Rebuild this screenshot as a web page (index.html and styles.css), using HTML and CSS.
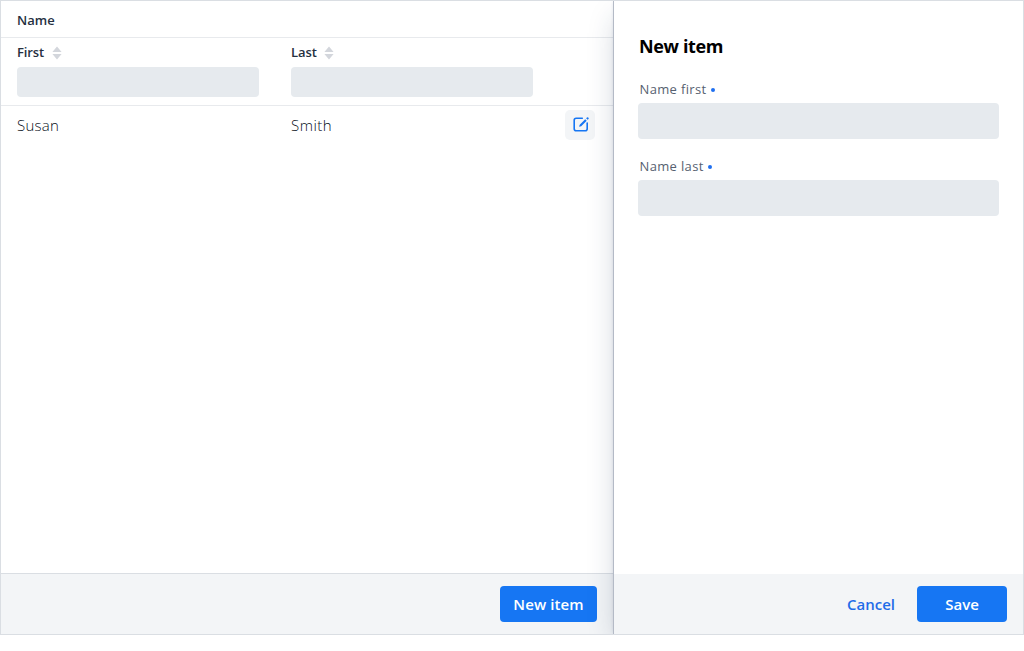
FILE: index.html
```html
<!DOCTYPE html>
<html lang="en">
<head>
<meta charset="utf-8">
<title>New item</title>
<link rel="stylesheet" href="styles.css">
</head>
<body>
<div class="crud">
  <main class="list">
    <div class="grid">
      <div class="group-row"><span class="head name">Name</span></div>
      <div class="row filter-row">
        <div class="cell">
          <div class="sorter"><span class="head first">First</span><svg class="sort" viewBox="0 0 10 14"><path d="M5 0.5 9.6 6H.4zM.4 8h9.2L5 13.5z"/></svg></div>
          <input class="filter" type="text" aria-label="First">
        </div>
        <div class="cell">
          <div class="sorter"><span class="head last">Last</span><svg class="sort" viewBox="0 0 10 14"><path d="M5 0.5 9.6 6H.4zM.4 8h9.2L5 13.5z"/></svg></div>
          <input class="filter" type="text" aria-label="Last">
        </div>
      </div>
      <div class="row data-row">
        <div class="cell"><span class="value susan">Susan</span></div>
        <div class="cell"><span class="value smith">Smith</span></div>
        <button class="edit" aria-label="Edit"><svg viewBox="0 0 16 16"><path class="frame" d="M9.3 2.2H3.2Q1.2 2.2 1.2 4.2v8.6Q1.2 14.8 3.2 14.8h9q2 0 2-2V7"/><path class="pencil" d="m6.1 10.8.6-2.1 5.5-5.5 1.5 1.5-5.5 5.5zM13.1 2.3l.9-.9q.6-.5 1.1 0l.4.4q.5.5 0 1.1l-.9.9z"/></svg></button>
      </div>
    </div>
    <footer class="toolbar list-toolbar"><button class="btn primary new"><span>New item</span></button></footer>
  </main>
  <aside class="editor">
    <form class="form">
      <h3 class="title"><span>New item</span></h3>
      <div class="field"><label for="f"><span class="name-first">Name first</span><i class="dot"></i></label><input id="f" type="text"></div>
      <div class="field"><label for="l"><span class="name-last">Name last</span><i class="dot"></i></label><input id="l" type="text"></div>
    </form>
    <footer class="toolbar"><button class="btn cancel"><span>Cancel</span></button><button class="btn primary save"><span>Save</span></button></footer>
  </aside>
</div>
</body>
</html>
```
FILE: styles.css
```css
* { box-sizing: border-box; }
body { margin: 0; background: #fff; font-family: "Open Sans", "Noto Sans", sans-serif; color: #25303f; }
button, input { font: inherit; border: 0; margin: 0; padding: 0; }
span { white-space: nowrap; }
.crud { display: flex; width: 1024px; height: 635px; border: 1px solid #dadee3; overflow: hidden; }
.list { display: flex; flex-direction: column; width: 612px; }
.grid { flex: 1; }
.group-row { display: flex; align-items: center; height: 37px; padding: 1px 16px 0; border-bottom: 1px solid #e8eaed; }
.row { display: flex; padding-left: 16px; }
.cell { width: 274px; }
.filter-row { height: 68px; border-bottom: 1px solid #e8eaed; }
.head { font-size: 13px; font-weight: 600; line-height: 20px; }
.first, .last { letter-spacing: -0.1px; }
.sorter { display: flex; align-items: center; gap: 7.5px; height: 29px; padding-bottom: 1px; }
.sort { width: 10px; height: 14px; fill: #d3d6dc; margin-top: 2px; }
.filter { display: block; width: 242px; height: 30px; border-radius: 4px; background: #e6eaee; }
.data-row { align-items: center; height: 38px; }
.value { font-size: 15px; font-weight: 300; line-height: 24px; color: #060d18; }
.susan { letter-spacing: 0.25px; }
.smith { letter-spacing: 0.5px; }
.edit { display: grid; place-items: center; width: 30px; height: 30px; border-radius: 5px; background: #f3f5f7; }
.edit svg { width: 16px; height: 16px; margin: -3px 0 0 1px; }
.frame { fill: none; stroke: #1676f3; stroke-width: 1.6; stroke-linecap: round; }
.pencil { fill: #1676f3; }
.toolbar { display: flex; justify-content: flex-end; align-items: center; height: 60px; padding: 0 16px; background: #f3f5f7; }
.list-toolbar { height: 61px; border-top: 1px solid #dadee3; }
.btn { height: 36px; border-radius: 4px; font-size: 15px; font-weight: 600; line-height: 36px; text-align: center; }
.primary { color: #fff; background: #1676f3; }
.new { width: 97px; letter-spacing: 0.1px; }
.save { width: 90px; }
.cancel { width: 76px; margin-right: 8px; color: #1f6ce8; background: transparent; }
.editor { display: flex; flex-direction: column; position: relative; width: 411px; flex: none; margin-right: -1px; background: #fff; border-left: 1px solid #b4bac6; border-right: 1px solid #dadee3; box-shadow: 0 0 4px -1px rgba(25,50,85,.15), 0 12px 28px -6px rgba(25,50,85,.27); }
.form { flex: 1; padding: 32px 24px 0; }
.title { margin: 0 0 20px; font-size: 18px; font-weight: 700; line-height: 26px; letter-spacing: -0.35px; color: #000; padding-left: 1px; }
.field { margin-bottom: 17px; }
.field label { display: flex; align-items: center; height: 20px; margin-bottom: 4px; padding-left: 1.5px; font-size: 13px; font-weight: 500; line-height: 20px; letter-spacing: 0.35px; color: #566170; }
.dot { width: 4px; height: 4px; margin: 1px 0 0 4.5px; border-radius: 50%; background: #1f6ff0; }
.field input { display: block; width: 361px; height: 36px; border-radius: 4px; background: #e6eaee; }
```
